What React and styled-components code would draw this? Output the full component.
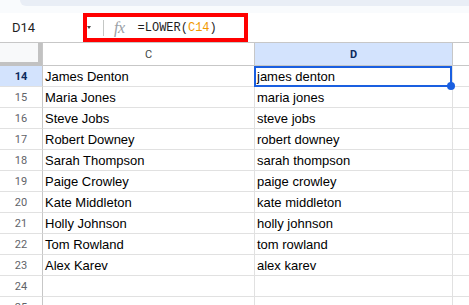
import React from 'react';
import styled, { createGlobalStyle } from 'styled-components';

const GlobalStyle = createGlobalStyle`
  html, body {
    margin: 0;
    padding: 0;
    background: #ffffff;
    overflow: hidden;
    font-family: Roboto, 'Liberation Sans', Arial, sans-serif;
  }
`;

const rows = [
  ['James Denton', 'james denton'],
  ['Maria Jones', 'maria jones'],
  ['Steve Jobs', 'steve jobs'],
  ['Robert Downey', 'robert downey'],
  ['Sarah Thompson', 'sarah thompson'],
  ['Paige Crowley', 'paige crowley'],
  ['Kate Middleton', 'kate middleton'],
  ['Holly Johnson', 'holly johnson'],
  ['Tom Rowland', 'tom rowland'],
  ['Alex Karev', 'alex karev'],
  ['', ''],
  ['', ''],
];

const Page = styled.div`
  width: 469px;
  height: 305px;
  overflow: hidden;
  display: flex;
  flex-direction: column;
`;

const TopStrip = styled.div`
  height: 13px;
  background: #f9fbfd;
  flex-shrink: 0;
`;

const Band = styled.div`
  height: 6px;
  margin-left: 20px;
  background: #e9eef6;
  border-bottom-left-radius: 8px;
`;

const FormulaBar = styled.div`
  height: 29px;
  flex-shrink: 0;
  display: flex;
  align-items: stretch;
  background: #ffffff;
`;

const NameBox = styled.div`
  width: 83px;
  padding-left: 12px;
  box-sizing: border-box;
  display: flex;
  align-items: center;
  font-size: 13px;
  color: #1f1f1f;
`;

const FormulaBox = styled.div`
  width: 165px;
  box-sizing: border-box;
  border: 4px solid #ff0000;
  display: flex;
  align-items: center;
`;

const Caret = styled.span`
  width: 0;
  height: 0;
  border-left: 2.5px solid transparent;
  border-right: 2.5px solid transparent;
  border-top: 3px solid #444746;
`;

const Divider = styled.span`
  width: 1px;
  height: 16px;
  margin-left: 12px;
  background: #c4c7c5;
`;

const FxLabel = styled.span`
  margin-left: 10px;
  font-family: 'Liberation Serif', 'DejaVu Serif', serif;
  font-style: italic;
  font-size: 16px;
  color: #9aa0a6;
  letter-spacing: -0.5px;
`;

const Formula = styled.span`
  margin-left: 13px;
  font-family: 'Liberation Mono', 'DejaVu Sans Mono', monospace;
  font-size: 12px;
  color: #1f1f1f;
`;

const Ref = styled.span`
  color: #f29900;
`;

const Sheet = styled.div`
  display: grid;
  grid-template-columns: 43px 212px 198px 1fr;
  grid-template-rows: 23px;
  grid-auto-rows: 21px;
  border-top: 1px solid #c7c7c7;
`;

const Corner = styled.div`
  box-sizing: border-box;
  background: #f8f9fa;
  border-right: 1px solid #c7c7c7;
  box-shadow: inset -4px -4px 0 #c2c2c2;
`;

const ColHead = styled.div`
  box-sizing: border-box;
  display: flex;
  align-items: center;
  justify-content: center;
  font-size: 11px;
  background: ${(p) => (p.$active ? '#d3e3fd' : '#ffffff')};
  color: ${(p) => (p.$active ? '#0b2a5c' : '#444746')};
  font-weight: ${(p) => (p.$active ? 700 : 400)};
  border-right: ${(p) => (p.$last ? 'none' : '1px solid #c7c7c7')};
  border-bottom: 1px solid #c7c7c7;
`;

const RowHead = styled.div`
  box-sizing: border-box;
  display: flex;
  align-items: center;
  justify-content: center;
  font-size: 11px;
  background: ${(p) => (p.$active ? '#d3e3fd' : '#ffffff')};
  color: ${(p) => (p.$active ? '#0b2a5c' : '#5f6368')};
  font-weight: ${(p) => (p.$active ? 700 : 400)};
  border-right: 1px solid #c7c7c7;
  border-bottom: 1px solid #e1e1e1;
`;

const Cell = styled.div`
  position: relative;
  box-sizing: border-box;
  display: flex;
  align-items: center;
  padding-left: 2px;
  font-family: 'Liberation Sans', Arial, sans-serif;
  font-size: 13px;
  color: #000000;
  white-space: nowrap;
  border-right: ${(p) => (p.$last ? 'none' : '1px solid #e1e1e1')};
  border-bottom: 1px solid #e1e1e1;

  ${(p) =>
    p.$selected &&
    `
    &::after {
      content: '';
      position: absolute;
      top: 0;
      left: -1px;
      right: 0;
      bottom: -1px;
      border: 2px solid #1a5fe0;
      pointer-events: none;
    }
  `}
`;

const FillHandle = styled.span`
  position: absolute;
  right: -3px;
  bottom: -4px;
  width: 8px;
  height: 8px;
  border-radius: 50%;
  background: #1a5fe0;
  z-index: 2;
`;

export default function App() {
  return (
    <>
      <GlobalStyle />
      <Page>
        <TopStrip>
          <Band />
        </TopStrip>
        <FormulaBar>
          <NameBox>D14</NameBox>
          <FormulaBox>
            <Caret />
            <Divider />
            <FxLabel>fx</FxLabel>
            <Formula>
              =LOWER(<Ref>C14</Ref>)
            </Formula>
          </FormulaBox>
        </FormulaBar>
        <Sheet>
          <Corner />
          <ColHead>C</ColHead>
          <ColHead $active>D</ColHead>
          <ColHead $last />
          {rows.map(([name, lower], i) => {
            const n = 14 + i;
            const active = n === 14;
            return (
              <React.Fragment key={n}>
                <RowHead $active={active}>{n}</RowHead>
                <Cell>{name}</Cell>
                <Cell $selected={active}>
                  {lower}
                  {active && <FillHandle />}
                </Cell>
                <Cell $last />
              </React.Fragment>
            );
          })}
        </Sheet>
      </Page>
    </>
  );
}
